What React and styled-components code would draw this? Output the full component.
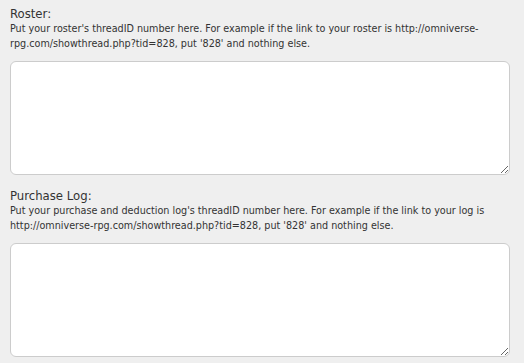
import React from "react";
import styled, { createGlobalStyle } from "styled-components";

const GlobalStyle = createGlobalStyle`
  body {
    margin: 0;
    background: #efefef;
    font-family: "DejaVu Sans Condensed", "DejaVu Sans", sans-serif;
    color: #333;
  }
`;

const Page = styled.div`
  padding: 6px 14px 0 10px;
`;

const Field = styled.div`
  display: flex;
  flex-direction: column;
  width: 500px;
  margin-bottom: 13px;
`;

const Label = styled.label`
  font-size: 13px;
  line-height: 16px;
  color: #333;
`;

const Hint = styled.div`
  font-size: 10.7px;
  line-height: 14.5px;
  color: #333;
  margin-bottom: 10px;
`;

const TextArea = styled.textarea`
  box-sizing: border-box;
  width: 500px;
  height: 114px;
  margin: 0;
  padding: 4px 6px;
  background: #fff;
  border: 1px solid #ccc;
  border-radius: 6px;
  font-family: inherit;
  font-size: 12px;
  outline: none;
`;

const fields = [
  {
    id: "roster",
    label: "Roster:",
    hint: "Put your roster's threadID number here. For example if the link to your roster is http://omniverse-rpg.com/showthread.php?tid=828, put '828' and nothing else.",
  },
  {
    id: "purchase",
    label: "Purchase Log:",
    hint: "Put your purchase and deduction log's threadID number here. For example if the link to your log is http://omniverse-rpg.com/showthread.php?tid=828, put '828' and nothing else.",
  },
];

export default function App() {
  return (
    <>
      <GlobalStyle />
      <Page>
        {fields.map((f) => (
          <Field key={f.id}>
            <Label htmlFor={f.id}>{f.label}</Label>
            <Hint>{f.hint}</Hint>
            <TextArea id={f.id} />
          </Field>
        ))}
      </Page>
    </>
  );
}
